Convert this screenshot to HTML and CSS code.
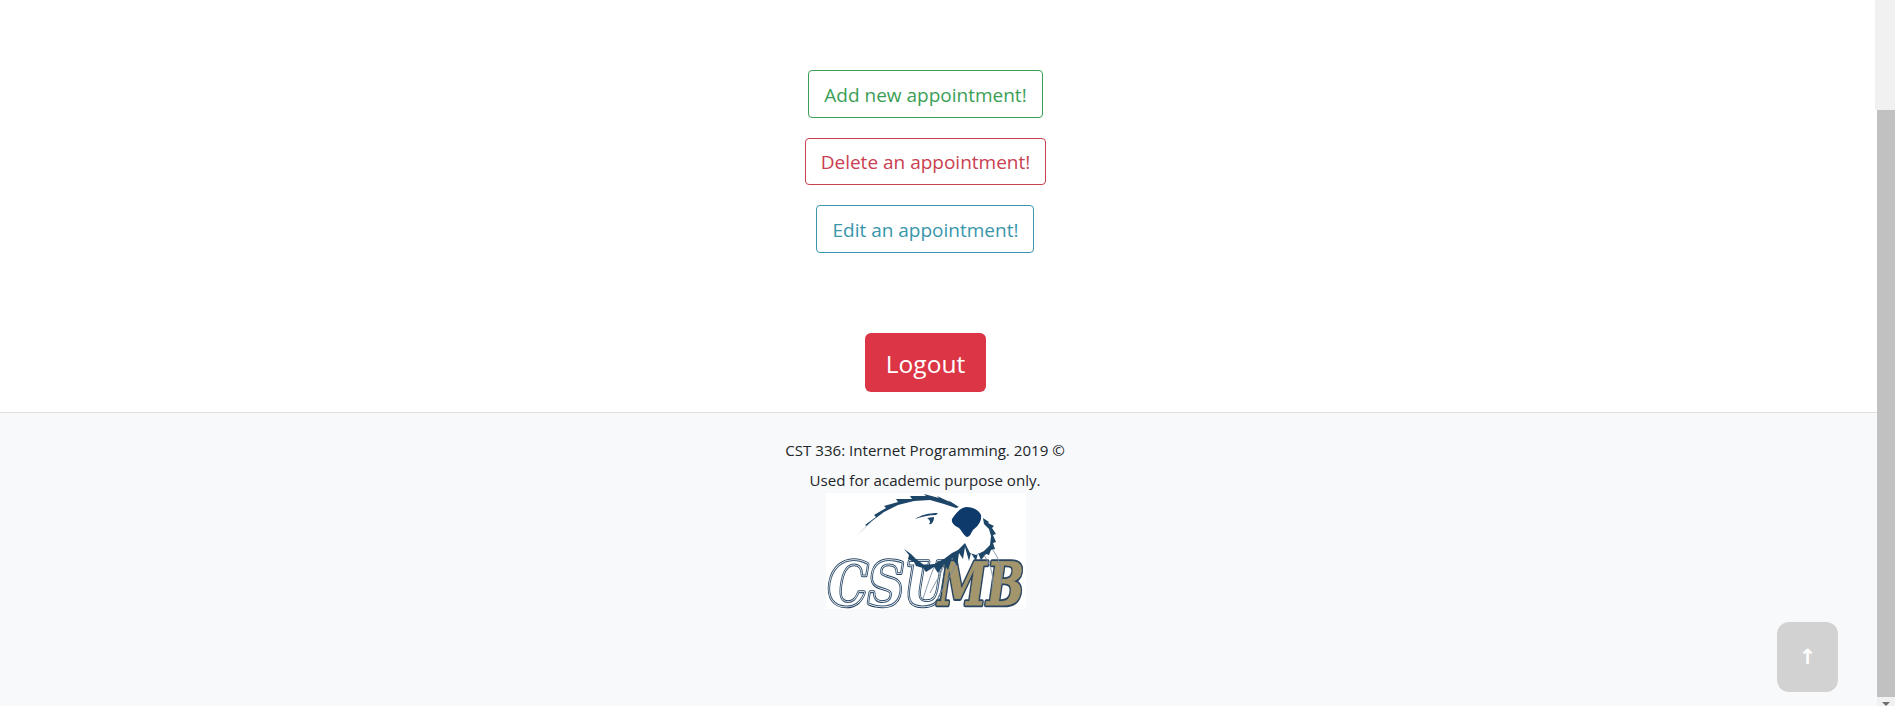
FILE: index.html
```html
<!DOCTYPE html>
<html lang="en">
<head>
<meta charset="utf-8">
<title>Appointments</title>
<link rel="stylesheet" href="styles.css">
</head>
<body>
<div class="page">
  <main class="content">
    <div class="actions">
      <a class="btn btn-add">Add new appointment!</a>
      <a class="btn btn-delete">Delete an appointment!</a>
      <a class="btn btn-edit">Edit an appointment!</a>
    </div>
    <a class="logout">Logout</a>
  </main>
  <footer class="footer">
    <p class="footer-line">CST 336: Internet Programming. 2019 ©</p>
    <p class="footer-line">Used for academic purpose only.</p>
    <svg class="logo" viewBox="0 0 200 116" role="img" aria-label="CSUMB">
      <defs>
        <text id="csu" x="2" y="112" textLength="120" lengthAdjust="spacingAndGlyphs">CSU</text>
        <text id="mb" x="112" y="112" textLength="86" lengthAdjust="spacingAndGlyphs">MB</text>
      </defs>
      <rect width="200" height="116" fill="#fff"/>
      <g class="letters">
        <use href="#csu" class="csu-outer"/>
        <use href="#csu" class="csu-ring"/>
        <use href="#csu" class="csu-inner"/>
        <use href="#mb" class="mb-outer"/>
        <use href="#mb" class="mb-fill"/>
      </g>
      <path class="fur" d="M30 43 L41 33 L39 32 L50 24 L48 22 L60 15 L58 13 L72 9 L70 6 L86 6 L84 3 L100 3 L98 1 L113 5 L111 3 L124 9 L122 7 L133 14 L130 15 L118 11 L104 7 L88 8 L72 12 L58 19 L46 28 Z"/>
      <path class="nose" d="M126 26 C130 20 134 15 140 14 C147 14 153 17 155 22 C156 29 151 34 147 37 C145 40 144 44 141 44 C138 43 136 38 133 35 C129 33 125 30 126 26 Z"/>
      <path class="brow" d="M89 26 C95 22 103 20 112 20 L110 22 C103 22 95 24 89 26 Z"/>
      <path class="eye" d="M101 25 L108 24 C108 28 106 32 103 31 C105 29 104 27 101 25 Z"/>
      <path class="cheek" d="M157 25 L163 29 L162 30 L168 33 L166 35 L170 41 L167 42 L170 49 L167 50 L169 56 L165 57 L163 62 L160 61 L155 67 L152 60 L150 68 L145 60 L143 68 L139 54 L137 66 L133 60 L131 73 L126 65 L122 77 L118 71 L112 80 L108 74 L100 79 L97 75 L90 73 L88 69 L82 66 L83 62 L78 56 L85 61 L90 66 L98 72 L108 71 L118 66 L126 60 L132 57 L139 50 L144 60 L150 62 L158 58 L164 52 L165 43 L163 36 L158 31 Z"/>
      <g class="whiskers">
        <path d="M166 56 C174 66 177 78 175 92"/>
        <path d="M158 62 C166 74 168 84 166 96"/>
        <path d="M130 70 C124 84 118 94 112 104"/>
        <path d="M118 73 C112 86 108 92 104 100"/>
        <path d="M108 74 C103 86 100 98 96 108"/>
      </g>
    </svg>
  </footer>
  <a class="to-top">↑</a>
</div>
<div class="scrollbar">
  <div class="scroll-track"></div>
  <div class="scroll-thumb"></div>
  <div class="scroll-down"><span class="scroll-arrow"></span></div>
</div>
</body>
</html>
```
FILE: styles.css
```css
* { box-sizing: border-box; }
html, body { margin: 0; height: 706px; overflow: hidden; }
body { display: flex; font-family: "Open Sans", "Noto Sans", sans-serif; color: #212529; background: #fff; }
.page { flex: 1; display: flex; flex-direction: column; position: relative; }
.content { height: 412px; padding: 70px 26px 0 0; display: flex; flex-direction: column; align-items: center; }
.actions { display: flex; flex-direction: column; align-items: center; gap: 19.5px; }
.btn { display: block; height: 48px; padding: 1px 15px 0; border: 1px solid; border-radius: 4px; font-size: 19px; line-height: 46px; white-space: nowrap; }
.btn-add { color: #3b9e55; border-color: #3b9e55; }
.btn-delete { color: #c94050; border-color: #c94050; padding-top: 0; height: 47px; margin-bottom: 1px; }
.btn-edit { color: #3996ab; border-color: #3996ab; }
.logout { display: block; margin-top: 80px; width: 121px; height: 59px; padding-top: 1px; border-radius: 6px; background: #dc3545; color: #fff; font-size: 24.5px; line-height: 59px; text-align: center; }
.footer { flex: 1; background: #f8f9fa; border-top: 1px solid #e0e0e0; padding: 25px 27px 0 0; display: flex; flex-direction: column; align-items: center; font-size: 15.1px; }
.footer-line { margin: 0 0 6px; line-height: 24px; }
.logo { display: block; width: 200px; height: 116px; margin: -5px 0 0 2px; }
.letters { font: italic bold 60px "DejaVu Serif", "Liberation Serif", serif; }
.csu-outer { fill: #fff; stroke: #1f3d5c; stroke-width: 4.6; stroke-linejoin: round; }
.csu-ring { fill: #fff; stroke: #fff; stroke-width: 2.6; stroke-linejoin: round; }
.csu-inner { fill: #fff; stroke: #3a5a78; stroke-width: 1.1; }
.mb-outer { fill: #2a4560; stroke: #2a4560; stroke-width: 4.6; stroke-linejoin: round; }
.mb-fill { fill: #a3966d; stroke: #a3966d; stroke-width: 0.8; }
.fur, .cheek, .brow, .eye { fill: #1c4568; }
.nose { fill: #0d3a6b; }
.whiskers { fill: none; stroke: #7d8fa3; stroke-width: 0.9; }
.to-top { position: absolute; left: 1777px; top: 622px; width: 61px; height: 70px; border-radius: 12px; background: #d2d2d2; color: #fff; font-family: "DejaVu Sans", sans-serif; font-size: 21px; font-weight: bold; display: flex; align-items: center; justify-content: center; }
.scrollbar { width: 18px; height: 706px; display: flex; flex-direction: column; background: #f1f1f1; }
.scroll-track { height: 110px; margin-left: -2px; background: #f1f1f1; }
.scroll-thumb { height: 587px; background: #c1c1c1; }
.scroll-down { flex: 1; display: flex; align-items: flex-end; justify-content: center; }
.scroll-arrow { width: 0; height: 0; border-left: 4px solid transparent; border-right: 4px solid transparent; border-top: 4px solid #6e6e6e; }
```
